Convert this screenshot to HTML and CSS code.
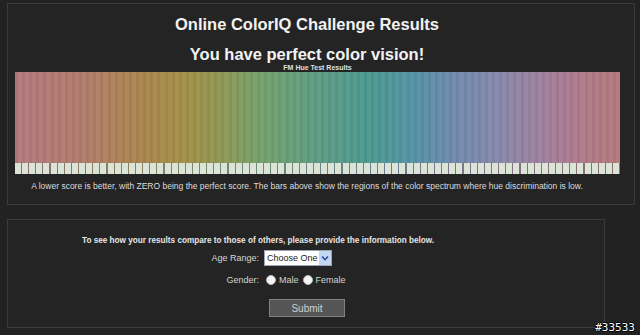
FILE: index.html
```html
<!DOCTYPE html>
<html lang="en">
<head>
    <meta charset="UTF-8">
    <meta name="viewport" content="width=device-width, initial-scale=1.0">
    <title>Online ColorIQ Challenge Results</title>
    <link rel="stylesheet" href="styles.css">
</head>
<body>
    <div class="results panel">
        <div class="heading">
            <h1>Online ColorIQ Challenge Results</h1>
            <h2>You have perfect color vision!</h2>
        </div>
        <div class="chart">
            <div class="chart-title">FM Hue Test Results</div>
            <div class="spectrum"></div>
            <div class="caps"></div>
            <p class="note">A lower score is better, with ZERO being the perfect score. The bars above show the regions of the color spectrum where hue discrimination is low.</p>
        </div>
    </div>

    <div class="compare panel">
        <form class="compare-form">
            <p class="intro">To see how your results compare to those of others, please provide the information below.</p>

            <label for="age">Age Range:</label>
            <div class="select-wrap">
                <select id="age" name="age">
                    <option>Choose One</option>
                    <option>Under 20</option>
                    <option>20 - 29</option>
                    <option>30 - 39</option>
                    <option>40 - 49</option>
                    <option>50 and over</option>
                </select>
                <span class="arrow">
                    <svg width="8" height="6" viewBox="0 0 8 6"><path d="M1 1.5 L4 4.5 L7 1.5" fill="none" stroke="#2a4f9a" stroke-width="1.6"/></svg>
                </span>
            </div>

            <span class="label">Gender:</span>
            <div class="radios">
                <label><input type="radio" name="gender" value="m"> Male</label>
                <label><input type="radio" name="gender" value="f"> Female</label>
            </div>

            <span></span>
            <button type="submit">Submit</button>
        </form>
    </div>

    <div class="stamp">#33533</div>
</body>
</html>
```

FILE: styles.css
```css
body {
    font-family: 'Liberation Sans', Arial, sans-serif;
    margin: 0;
    padding: 3px 0 0 7px;
    background: #222222;
    color: #e8e8e8;
    height: 332px;
    overflow: hidden;
}
.panel {
    border: 1px solid #3b3b3b;
    background: #242424;
    box-sizing: border-box;
}
.results {
    width: 628px;
    height: 202px;
}
.heading {
    width: 598px;
    text-align: center;
}
h1 {
    margin: 10px 0 0;
    font-size: 16.5px;
    line-height: 20px;
    color: #f2f2f2;
}
h2 {
    margin: 10px 0 0;
    font-size: 16.5px;
    line-height: 20px;
    color: #f2f2f2;
}
.chart {
    width: 605px;
    margin-left: 7px;
}
.chart-title {
    text-align: center;
    font-size: 7px;
    font-weight: bold;
    line-height: 8px;
    color: #e0e0e0;
}
.spectrum {
    height: 91px;
    background:
        repeating-linear-gradient(to right, rgba(0,0,0,0.04) 0 3px, rgba(255,255,255,0.03) 3px 7.12px),
        linear-gradient(to right,
            #b47a7f 0%, #b27b6e 10%, #ab844f 20%, #a38f47 28%, #8b9a57 35%,
            #70a070 42%, #5d9c82 50%, #4c9a8f 58%, #5592a6 66%, #6e8aac 72%,
            #8888aa 80%, #a27f9c 88%, #b07a88 94%, #b47a7c 100%);
}
.caps {
    height: 11px;
    background:
        repeating-linear-gradient(to right, #dbe4d6 0 6px, transparent 6px 7.12px),
        linear-gradient(to right, #8a7070, #8a8060, #6a8a78, #6a7e90, #86708a, #8a7070);
}
.note {
    margin: 7px 0 0;
    width: 598px;
    margin-left: -7px;
    text-align: center;
    font-size: 8.5px;
    line-height: 10px;
    color: #dcdcdc;
}
.compare {
    width: 598px;
    height: 109px;
    margin-top: 14px;
}
.compare-form {
    width: 352px;
    margin: 16px 0 0 74px;
    display: grid;
    grid-template-columns: 177px 1fr;
    column-gap: 5px;
    font-size: 9px;
    color: #d4d4d4;
}
.intro {
    grid-column: 1 / 3;
    margin: 0 0 4px;
    text-align: center;
    white-space: nowrap;
    font-weight: bold;
    font-size: 8.2px;
    line-height: 10px;
    color: #e4e4e4;
}
.compare-form > label,
.compare-form > .label {
    text-align: right;
    line-height: 16px;
}
.select-wrap {
    position: relative;
    width: 68px;
    height: 16px;
}
.select-wrap select {
    appearance: none;
    -webkit-appearance: none;
    width: 68px;
    height: 16px;
    margin: 0;
    padding: 0 0 0 2px;
    border: 1px solid #9aa4b4;
    background: #ffffff;
    font-family: 'Liberation Sans', Arial, sans-serif;
    font-size: 9px;
    color: #222;
    box-sizing: border-box;
}
.arrow {
    position: absolute;
    right: 1px;
    top: 1px;
    width: 12px;
    height: 14px;
    background: #c4d6f2;
    display: flex;
    align-items: center;
    justify-content: center;
}
.compare-form > .label {
    margin-top: 6px;
}
.radios {
    margin-top: 6px;
    display: flex;
    gap: 4px;
    line-height: 16px;
    padding-left: 2px;
}
.radios label {
    display: flex;
    align-items: center;
    gap: 3px;
}
.radios input {
    appearance: none;
    -webkit-appearance: none;
    width: 10px;
    height: 10px;
    margin: 0;
    border-radius: 50%;
    background: #f4f4f4;
    border: 1px solid #b8b8b8;
}
button {
    grid-column: 2;
    margin: 11px 0 0 5px;
    width: 76px;
    height: 18px;
    background: #555555;
    border: 1px solid #808080;
    color: #cfcfcf;
    font-family: 'Liberation Sans', Arial, sans-serif;
    font-size: 10px;
    padding: 0;
}
.stamp {
    position: absolute;
    right: 5px;
    bottom: 1px;
    font-family: 'DejaVu Sans Mono', monospace;
    font-size: 11px;
    color: #ffffff;
    text-shadow: 1px 0 #000, -1px 0 #000, 0 1px #000, 0 -1px #000;
}
```
